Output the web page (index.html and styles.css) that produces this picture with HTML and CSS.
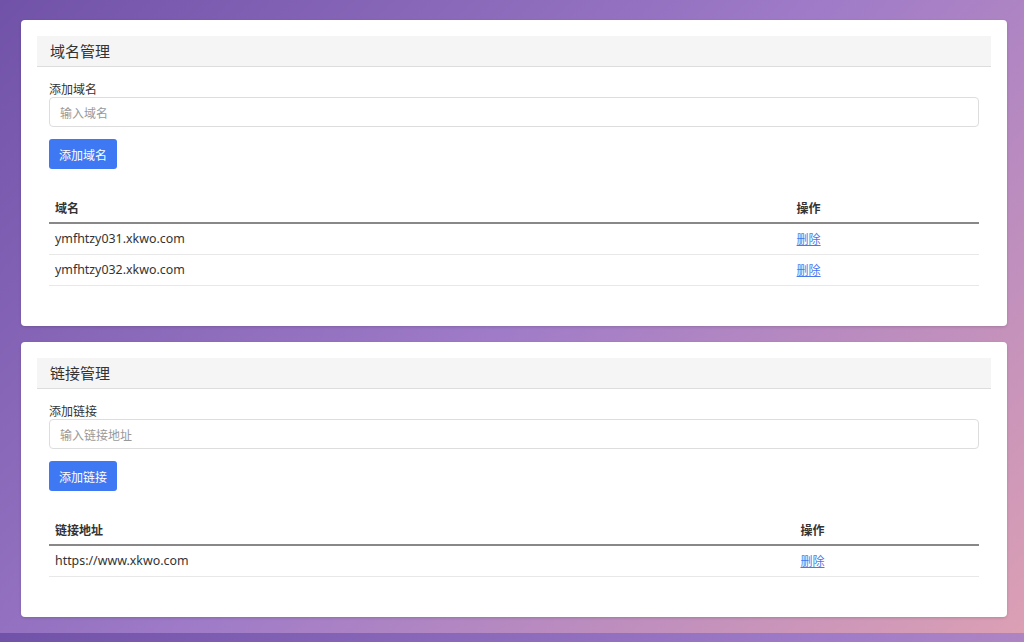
FILE: index.html
```html
<!DOCTYPE html>
<html lang="zh-CN">
<head>
    <meta charset="UTF-8">
    <meta name="viewport" content="width=device-width, initial-scale=1.0">
    <title>域名与链接管理</title>
    <link rel="stylesheet" href="styles.css">
</head>
<body>

    <div class="card">
        <div class="card-header">域名管理</div>
        <div class="card-body">
            <label for="domainInput">添加域名</label>
            <input type="text" id="domainInput" placeholder="输入域名">
            <button class="btn" onclick="addDomain()">添加域名</button>

            <table>
                <thead>
                    <tr>
                        <th>域名</th>
                        <th>操作</th>
                    </tr>
                </thead>
                <tbody id="domainList">
                    <tr>
                        <td>ymfhtzy031.xkwo.com</td>
                        <td><a href="#">删除</a></td>
                    </tr>
                    <tr>
                        <td>ymfhtzy032.xkwo.com</td>
                        <td><a href="#">删除</a></td>
                    </tr>
                </tbody>
            </table>
        </div>
    </div>

    <div class="card">
        <div class="card-header">链接管理</div>
        <div class="card-body">
            <label for="linkInput">添加链接</label>
            <input type="text" id="linkInput" placeholder="输入链接地址">
            <button class="btn" onclick="addLink()">添加链接</button>

            <table>
                <thead>
                    <tr>
                        <th>链接地址</th>
                        <th>操作</th>
                    </tr>
                </thead>
                <tbody id="linkList">
                    <tr>
                        <td>https://www.xkwo.com</td>
                        <td><a href="#">删除</a></td>
                    </tr>
                </tbody>
            </table>
        </div>
    </div>

</body>
</html>
```

FILE: styles.css
```css
body {
    font-family: "Noto Sans", "Noto Sans CJK SC", sans-serif;
    margin: 0;
    padding: 20px 17px 0 21px;
    background: linear-gradient(135deg, #7052a8 0%, #9f7bc8 50%, #dca0b4 100%);
    color: #333;
}
.card {
    background-color: white;
    border-radius: 4px;
    padding: 16px;
    margin-bottom: 16px;
    box-shadow: 0 1px 3px rgba(0, 0, 0, 0.15);
}
.card-header {
    background-color: #f5f5f5;
    border-bottom: 1px solid #ddd;
    height: 30px;
    line-height: 30px;
    padding: 0 13px;
    font-size: 15px;
    font-family: "Noto Sans CJK SC", sans-serif;
}
.card-body {
    padding: 14px 12px 24px;
}
label {
    display: block;
    font-size: 12px;
    line-height: 16px;
    font-family: "Noto Sans CJK SC", sans-serif;
}
input {
    display: block;
    box-sizing: border-box;
    width: 100%;
    height: 30px;
    padding: 0 10px;
    border: 1px solid #ddd;
    border-radius: 4px;
    font-size: 12px;
    font-family: "Noto Sans CJK SC", sans-serif;
}
input::placeholder {
    color: #999;
}
.btn {
    display: block;
    margin-top: 12px;
    height: 30px;
    padding: 0 10px;
    border: none;
    border-radius: 3px;
    background-color: #3f78f3;
    color: white;
    font-size: 12px;
    font-family: "Noto Sans CJK SC", sans-serif;
    cursor: pointer;
}
table {
    width: 100%;
    border-collapse: collapse;
    margin-top: 22px;
}
th {
    text-align: left;
    font-size: 12px;
    font-weight: bold;
    line-height: 19px;
    padding: 7px 6px 5px;
    border-bottom: 2px solid #888;
    font-family: "Noto Sans CJK SC", sans-serif;
}
td {
    font-size: 12.4px;
    line-height: 18px;
    padding: 6px;
    border-bottom: 1px solid #e8e8e8;
}
td a {
    display: inline-block;
    vertical-align: top;
    color: #4a78ee;
    font-size: 12px;
    line-height: 18px;
    font-family: "Noto Sans CJK SC", sans-serif;
}
```
